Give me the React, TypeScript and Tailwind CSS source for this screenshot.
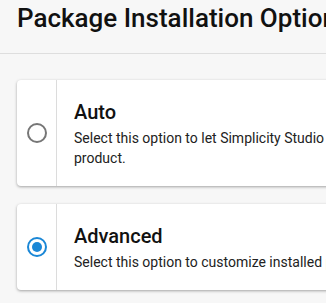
import React from "react";

function Radio({ checked }: { checked: boolean }) {
  return checked ? (
    <div className="w-5 h-5 rounded-full border-2 border-[#1a87d6] flex items-center justify-center">
      <div className="w-[10px] h-[10px] rounded-full bg-[#1a87d6]" />
    </div>
  ) : (
    <div className="w-5 h-5 rounded-full border-2 border-[#767676]" />
  );
}

function OptionCard({
  title,
  lines,
  checked,
}: {
  title: string;
  lines: string[];
  checked: boolean;
}) {
  return (
    <div className="flex bg-white rounded-[4px] shadow-[0_1px_3px_rgba(0,0,0,0.35)] w-[620px]">
      <div className="w-10 shrink-0 flex items-center justify-center border-r border-[#dcdcdc]">
        <Radio checked={checked} />
      </div>
      <div className="pl-[17px] py-[18px]">
        <div className="text-[20px] leading-[28px] font-medium text-[#111]">{title}</div>
        <div className="mt-0.5 text-[14px] leading-[20px] text-[#222]">
          {lines.map((l, i) => (
            <div key={i}>{l}</div>
          ))}
        </div>
      </div>
    </div>
  );
}

export default function App() {
  return (
    <div
      className="w-[326px] h-[303px] overflow-hidden bg-[#f7f7f7]"
      style={{ fontFamily: "Roboto, 'Noto Sans', sans-serif" }}
    >
      <div className="w-[700px]">
        <div className="h-[54px] border-b border-[#dedede] pl-[17px] pt-[2px]">
          <h1 className="text-[26px] leading-[32px] font-medium text-[#111]">
            Package Installation Options
          </h1>
        </div>
        <div className="pl-[17px] pt-[26px] flex flex-col gap-[18px]">
          <OptionCard
            title="Auto"
            checked={false}
            lines={[
              "Select this option to let Simplicity Studio install the recommended packages for your",
              "product.",
            ]}
          />
          <OptionCard
            title="Advanced"
            checked={true}
            lines={["Select this option to customize installed packages."]}
          />
        </div>
      </div>
    </div>
  );
}
